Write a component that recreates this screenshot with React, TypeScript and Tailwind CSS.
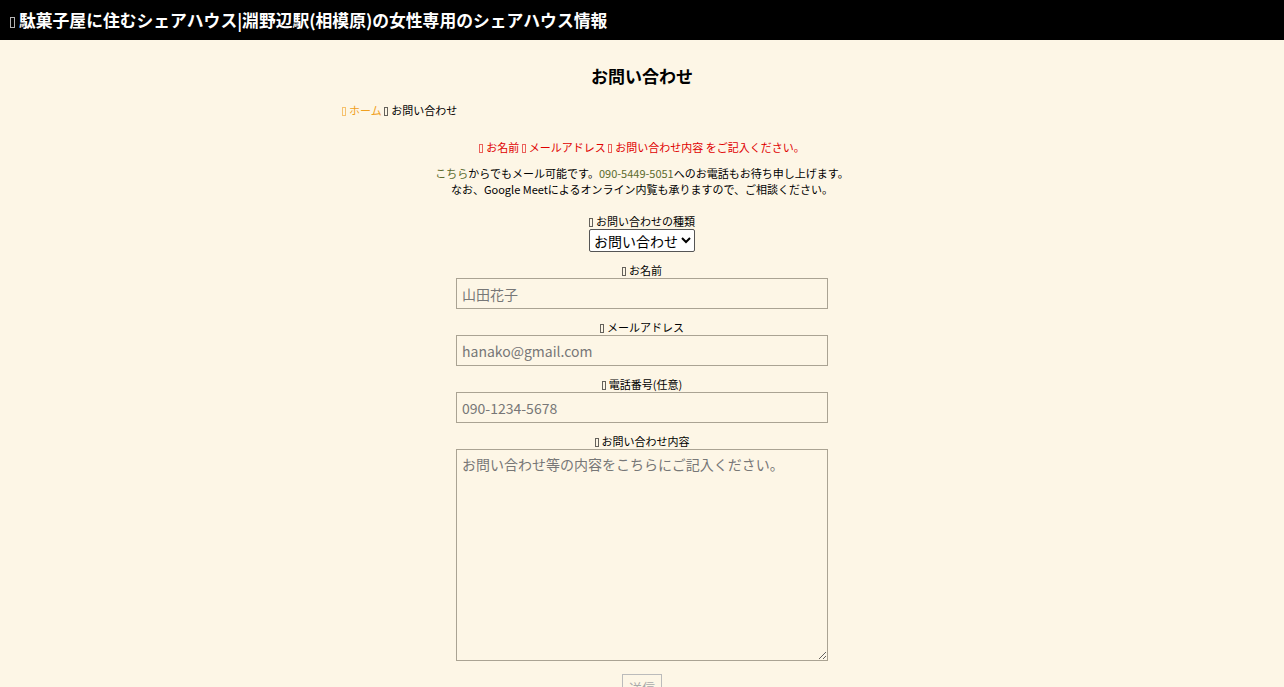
import React from 'react'

function Tofu({ className = '' }: { className?: string }) {
    return (
        <span
            className={`inline-block w-[4px] h-[9px] border border-current opacity-60 mr-[3px] align-[-1px] ${className}`}
        />
    )
}

function Field({
    label,
    placeholder,
    type = 'text'
}: {
    label: string
    placeholder: string
    type?: string
}) {
    return (
        <div className="flex flex-col items-center mt-[11px]">
            <label className="text-[11px] leading-[14px] text-black">
                <Tofu />
                {label}
            </label>
            <input
                type={type}
                placeholder={placeholder}
                className="mt-[1px] w-[372px] h-[31px] border border-[#aaa393] bg-transparent px-[5px] text-[14px] text-black placeholder:text-[#777] outline-none"
            />
        </div>
    )
}

export default function App() {
    return (
        <div
            className="min-h-screen bg-[#fdf6e6] text-black"
            style={{ fontFamily: '"Noto Sans CJK JP", "Noto Sans", sans-serif' }}>
            <header className="h-[40px] bg-black flex items-center px-[10px]">
                <h1 className="text-white font-bold text-[16.8px] leading-none">
                    <Tofu className="w-[5px] h-[11px] mr-[4px] opacity-70" />
                    駄菓子屋に住むシェアハウス|淵野辺駅(相模原)の女性専用のシェアハウス情報
                </h1>
            </header>

            <main className="w-[600px] mx-auto">
                <h2 className="text-center font-bold text-[17px] leading-[24px] mt-[24px]">
                    お問い合わせ
                </h2>
                <nav className="text-[11px] leading-[14px] mt-[15px]">
                    <span className="text-[#f0a020]">
                        <Tofu />
                        ホーム
                    </span>{' '}
                    <Tofu />
                    お問い合わせ
                </nav>

                <p className="text-center text-[11px] leading-[14px] text-[#e00000] mt-[23px]">
                    <Tofu />
                    お名前 <Tofu />
                    メールアドレス <Tofu />
                    お問い合わせ内容 をご記入ください。
                </p>

                <p className="text-center text-[11px] leading-[16px] mt-[11px]">
                    <span className="text-[#5c6b2d]">こちら</span>からでもメール可能です。
                    <span className="text-[#5c6b2d]">090-5449-5051</span>
                    へのお電話もお待ち申し上げます。
                    <br />
                    なお、Google Meetによるオンライン内覧も承りますので、ご相談ください。
                </p>

                <form className="pt-[6px]">
                    <div className="flex flex-col items-center mt-[11px]">
                        <label className="text-[11px] leading-[14px]">
                            <Tofu />
                            お問い合わせの種類
                        </label>
                        <select className="mt-[1px] h-[23px] border border-[#555] rounded-[2px] bg-white text-[14px] leading-none text-black px-0">
                            <option>お問い合わせ</option>
                            <option>内覧希望</option>
                        </select>
                    </div>

                    <Field label="お名前" placeholder="山田花子" />
                    <Field label="メールアドレス" placeholder="hanako@gmail.com" type="email" />
                    <Field label="電話番号(任意)" placeholder="090-1234-5678" type="tel" />

                    <div className="flex flex-col items-center mt-[11px]">
                        <label className="text-[11px] leading-[14px]">
                            <Tofu />
                            お問い合わせ内容
                        </label>
                        <textarea
                            placeholder="お問い合わせ等の内容をこちらにご記入ください。"
                            className="mt-[1px] w-[372px] h-[212px] border border-[#aaa393] bg-transparent px-[5px] py-[4px] text-[14px] text-black placeholder:text-[#777] outline-none"
                        />
                    </div>

                    <div className="flex justify-center mt-[13px] pb-[20px]">
                        <button
                            type="submit"
                            disabled
                            className="w-[40px] h-[28px] border border-[#bbb] text-[13px] text-[#aaa]">
                            送信
                        </button>
                    </div>
                </form>
            </main>
        </div>
    )
}
